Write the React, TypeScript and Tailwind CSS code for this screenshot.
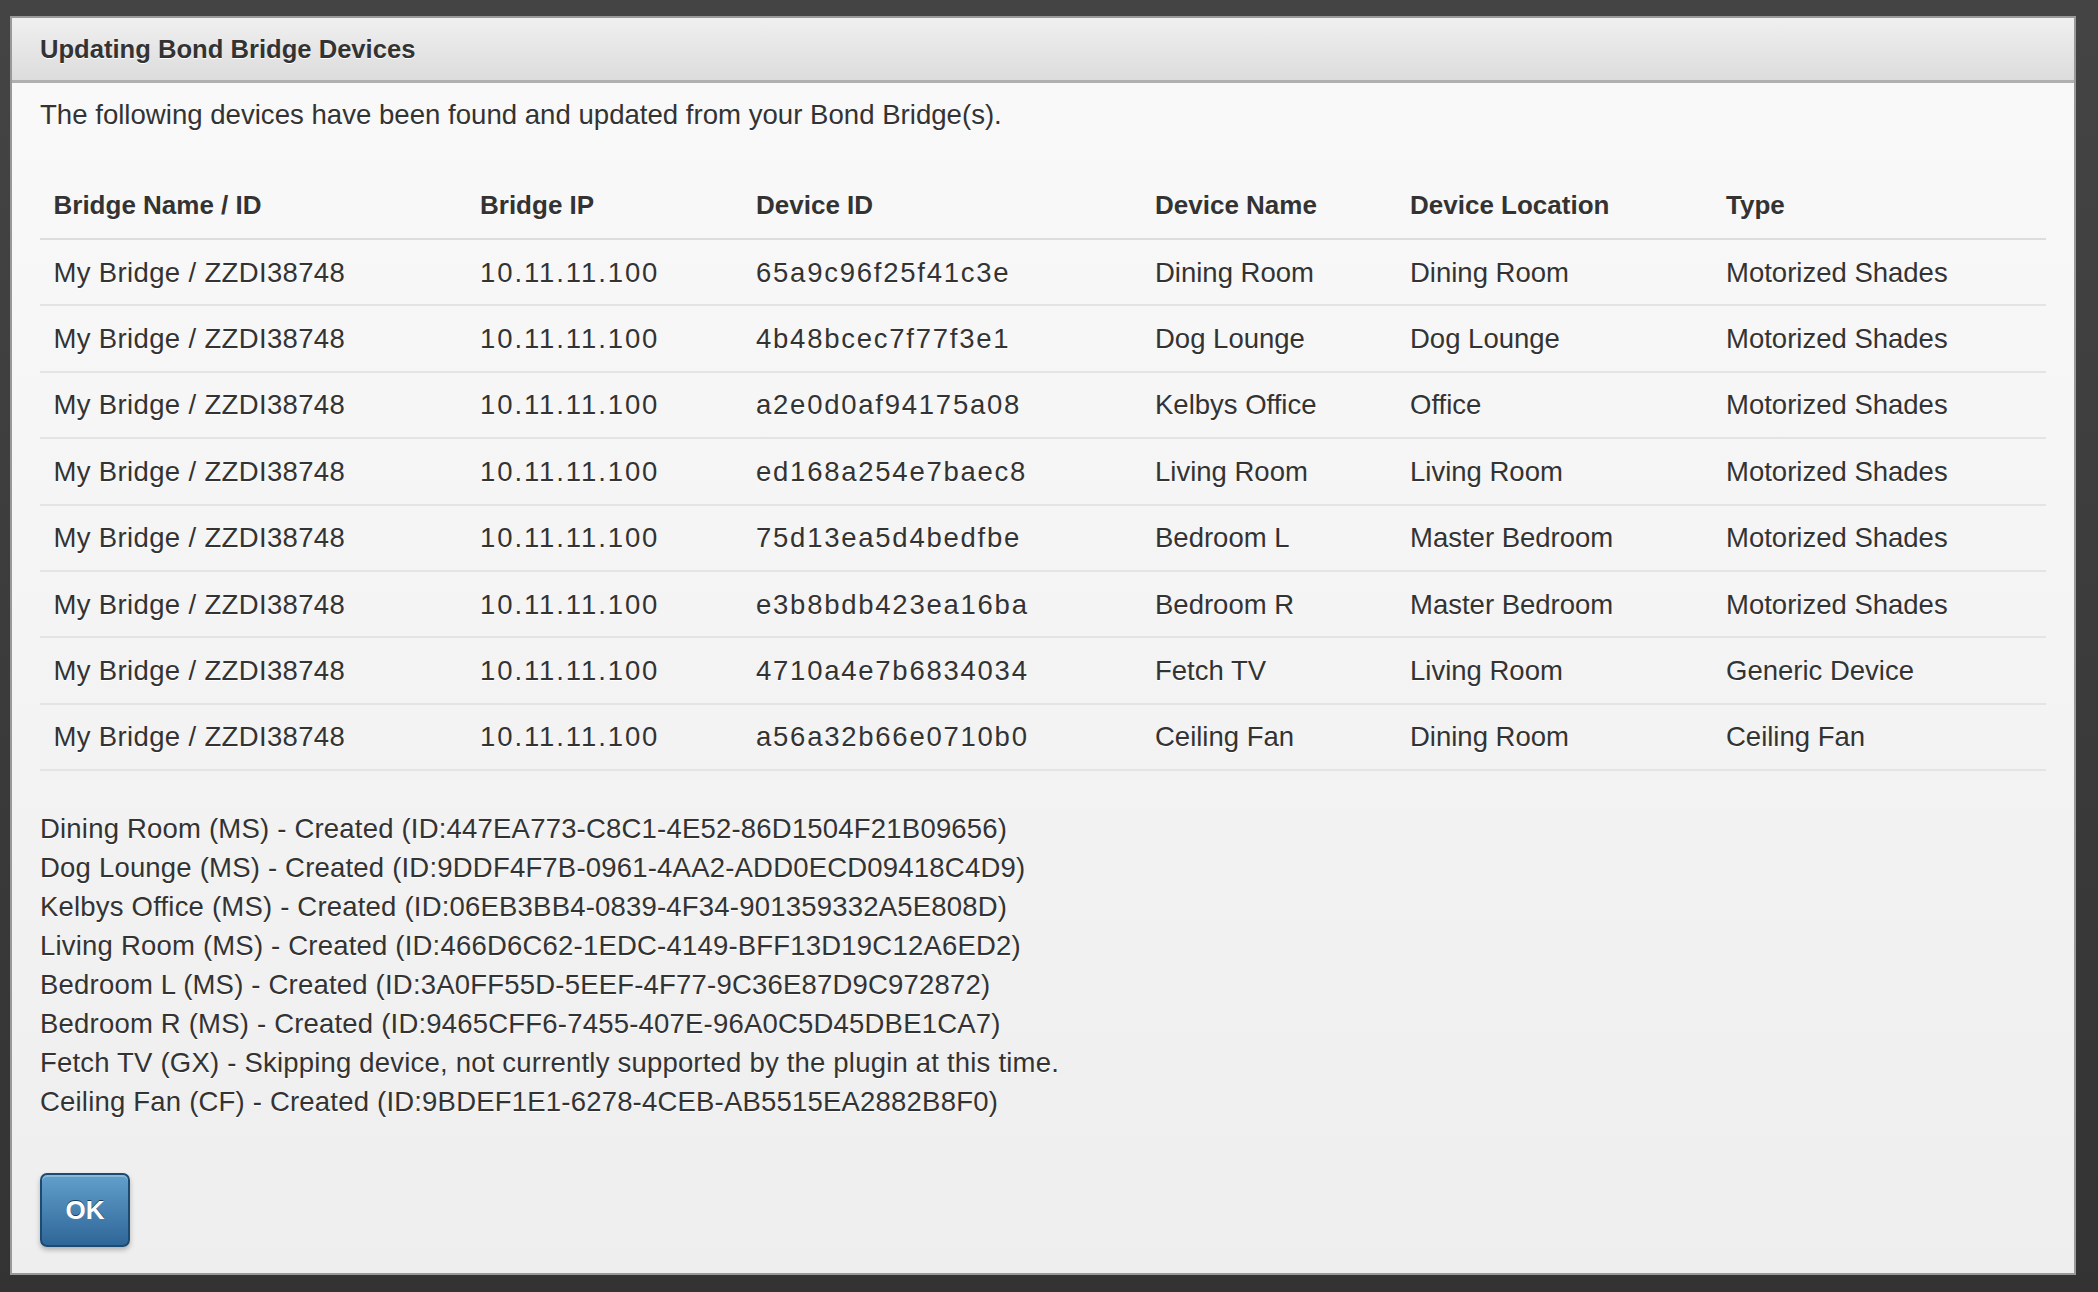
import React from "react";

const rows = [
  ["65a9c96f25f41c3e", "Dining Room", "Dining Room", "Motorized Shades"],
  ["4b48bcec7f77f3e1", "Dog Lounge", "Dog Lounge", "Motorized Shades"],
  ["a2e0d0af94175a08", "Kelbys Office", "Office", "Motorized Shades"],
  ["ed168a254e7baec8", "Living Room", "Living Room", "Motorized Shades"],
  ["75d13ea5d4bedfbe", "Bedroom L", "Master Bedroom", "Motorized Shades"],
  ["e3b8bdb423ea16ba", "Bedroom R", "Master Bedroom", "Motorized Shades"],
  ["4710a4e7b6834034", "Fetch TV", "Living Room", "Generic Device"],
  ["a56a32b66e0710b0", "Ceiling Fan", "Dining Room", "Ceiling Fan"],
];

const logs = [
  "Dining Room (MS) - Created (ID:447EA773-C8C1-4E52-86D1504F21B09656)",
  "Dog Lounge (MS) - Created (ID:9DDF4F7B-0961-4AA2-ADD0ECD09418C4D9)",
  "Kelbys Office (MS) - Created (ID:06EB3BB4-0839-4F34-901359332A5E808D)",
  "Living Room (MS) - Created (ID:466D6C62-1EDC-4149-BFF13D19C12A6ED2)",
  "Bedroom L (MS) - Created (ID:3A0FF55D-5EEF-4F77-9C36E87D9C972872)",
  "Bedroom R (MS) - Created (ID:9465CFF6-7455-407E-96A0C5D45DBE1CA7)",
  "Fetch TV (GX) - Skipping device, not currently supported by the plugin at this time.",
  "Ceiling Fan (CF) - Created (ID:9BDEF1E1-6278-4CEB-AB5515EA2882B8F0)",
];

const grid = "grid grid-cols-[427px_276px_399px_255px_316px_333px]";

export default function App() {
  return (
    <div
      className="w-[2098px] h-[1292px] bg-gradient-to-b from-[#444444] to-[#333333] pt-[16px] pl-[10px] text-[#333333] [font-family:'Liberation_Sans',Arial,sans-serif]"
    >
      <div className="w-[2066px] h-[1259px] border-2 border-[#999999] flex flex-col">
        <div className="h-[65px] shrink-0 bg-gradient-to-b from-[#f0f0f0] to-[#dcdcdc] border-b-[3px] border-[#b0b0b0] flex items-center pl-[28px]">
          <h1 className="text-[25.6px] font-bold [text-shadow:0_1px_0_#ffffff]">
            Updating Bond Bridge Devices
          </h1>
        </div>
        <div className="flex-1 bg-gradient-to-b from-[#f9f9f9] to-[#eeeeee] px-[28px] pt-[14px] pb-[26px] flex flex-col [text-shadow:0_1px_0_#ffffff]">
          <p className="text-[27.6px] leading-[36px]">
            The following devices have been found and updated from your Bond Bridge(s).
          </p>

          <div className="mt-[40px] w-[2006px]">
            <div className={`${grid} h-[67px] items-center border-b-2 border-[#dddddd] text-[26px] font-bold`}>
              <div className="pl-[13.5px]">Bridge Name / ID</div>
              <div className="pl-[13px]">Bridge IP</div>
              <div className="pl-[13px]">Device ID</div>
              <div className="pl-[13px]">Device Name</div>
              <div className="pl-[13px]">Device Location</div>
              <div className="pl-[13px]">Type</div>
            </div>
            {rows.map((r, i) => (
              <div
                key={i}
                className={`${grid} h-[66.4px] items-center border-b-2 border-[#e4e4e4] text-[27.5px]`}
              >
                <div className="pl-[13.5px] tracking-[0.35px]">My Bridge / ZZDI38748</div>
                <div className="pl-[13px] tracking-[1.9px]">10.11.11.100</div>
                <div className="pl-[13px] tracking-[1.75px]">{r[0]}</div>
                <div className="pl-[13px]">{r[1]}</div>
                <div className="pl-[13px]">{r[2]}</div>
                <div className="pl-[13px]">{r[3]}</div>
              </div>
            ))}
          </div>

          <div className="mt-[38px] flex flex-col text-[27.5px] leading-[39px] tracking-[0.2px]">
            {logs.map((l, i) => (
              <div key={i}>{l}</div>
            ))}
          </div>

          <div className="mt-auto">
            <button className="w-[90px] h-[74px] rounded-[7px] border-2 border-[#1c4b72] bg-gradient-to-b from-[#62a0cc] to-[#2e6698] shadow-[inset_0_2px_0_rgba(255,255,255,0.25),0_3px_5px_rgba(0,0,0,0.25)] text-white font-bold text-[26px] [text-shadow:0_-1px_0_#1a3d5c] flex items-center justify-center">
              OK
            </button>
          </div>
        </div>
      </div>
    </div>
  );
}
